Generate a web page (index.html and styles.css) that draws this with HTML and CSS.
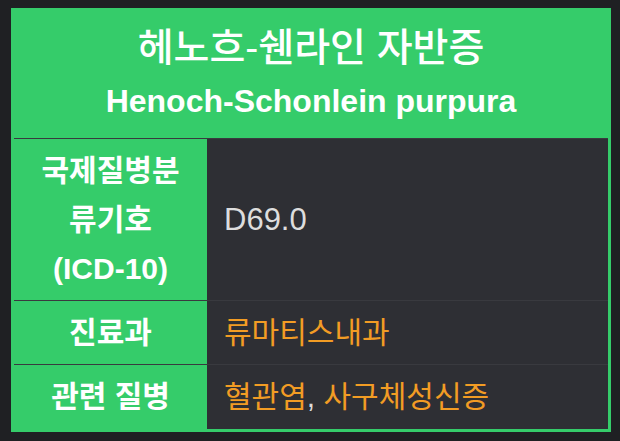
FILE: index.html
```html
<!DOCTYPE html>
<html lang="ko">
<head>
<meta charset="utf-8">
<link rel="stylesheet" href="styles.css">
</head>
<body>
<div class="infobox">
  <div class="title">
    <div class="title-ko">헤노흐-쉔라인 자반증</div>
    <div class="title-en">Henoch-Schonlein purpura</div>
  </div>
  <div class="rows">
    <div class="label">국제질병분<br>류기호<br>(ICD-10)</div>
    <div class="value"><span class="plain code">D69.0</span></div>
    <div class="label">진료과</div>
    <div class="value"><span><span class="link">류마티스내과</span></span></div>
    <div class="label last">관련 질병</div>
    <div class="value last"><span><span class="link">혈관염</span><span class="plain">, </span><span class="link">사구체성신증</span></span></div>
  </div>
</div>
</body>
</html>
```
FILE: styles.css
```css
html, body {
  margin: 0;
  padding: 0;
  background: #1f2023;
}
body {
  font-family: "Liberation Sans", "Noto Sans CJK KR", sans-serif;
}
.infobox {
  margin: 8px 0 0 11px;
  width: 600px;
  box-sizing: border-box;
  border: 3px solid #35cc6a;
  background: #35cc6a;
}
.title {
  padding: 10px 0 11px;
  text-align: center;
  color: #ffffff;
}
.title-ko {
  font-size: 39px;
  line-height: 54px;
  font-weight: 500;
}
.title-en {
  font-size: 32px;
  line-height: 52px;
  font-weight: 700;
}
.rows {
  display: grid;
  grid-template-columns: 193px 1fr;
}
.label,
.value {
  border-top: 1px solid #393a3f;
  padding: 7px 0;
  font-size: 30px;
  line-height: 49px;
}
.label {
  background: #35cc6a;
  color: #ffffff;
  font-weight: 700;
  text-align: center;
}
.value {
  background: #2e2f34;
  padding-left: 17px;
  display: flex;
  align-items: center;
}
.last {
  padding-bottom: 8px;
}
.plain {
  color: #dddddd;
}
.code {
  font-size: 31px;
}
.link {
  color: #f29c24;
}
```
